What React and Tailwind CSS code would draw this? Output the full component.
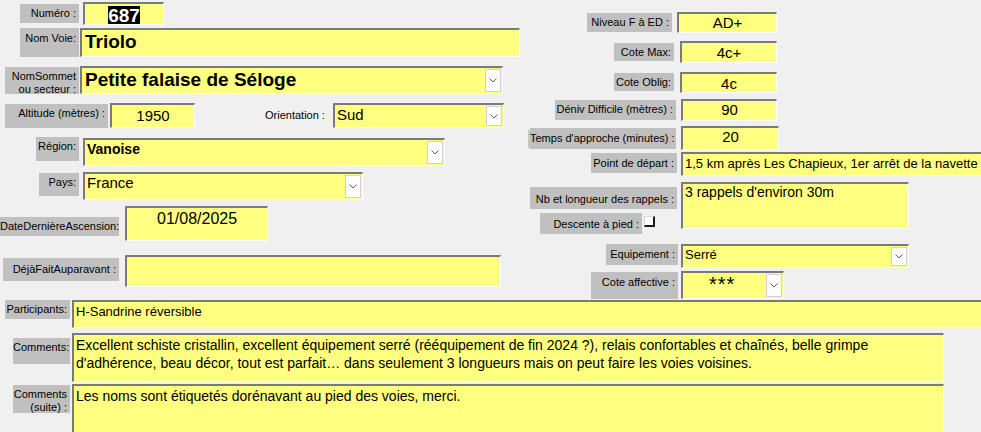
import React from 'react';
import clsx from 'clsx';

// Access-style gray caption
const Label = ({ className, children }) => (
  <div className={clsx('shrink-0 bg-[#c0c0c0] text-[11px] leading-[13px] text-black text-right pr-[3px] pt-[3px] whitespace-nowrap', className)}>
    {children}
  </div>
);

// sunken yellow text box
const Field = ({ className, children }) => (
  <div
    className={clsx(
      'relative shrink-0 bg-[#ffff80] border-t-2 border-l-2 border-r border-b border-t-[#7a7a7a] border-l-[#7a7a7a] border-r-white border-b-white overflow-hidden text-black',
      className
    )}
  >
    {children}
  </div>
);

const DropButton = () => (
  <div className="absolute right-[1px] top-[1px] bottom-[1px] w-[16px] bg-[#fdfdfd] border border-[#d2d2d2] flex items-center justify-center">
    <svg width="8" height="5" viewBox="0 0 8 5">
      <path d="M0.5 0.5 L4 4 L7.5 0.5" stroke="#606060" strokeWidth="1" fill="none" />
    </svg>
  </div>
);

const Combo = ({ className, children }) => (
  <Field className={className}>
    {children}
    <DropButton />
  </Field>
);

export default function App() {
  return (
    <div className="w-[981px] h-[432px] bg-[#f0f0f0] overflow-hidden font-['Liberation_Sans',Arial,sans-serif]">
      <div className="flex h-[300px]">
        {/* Left column */}
        <div className="w-[532px] shrink-0 flex flex-col">
          <div className="flex items-start mt-[2px]">
            <Label className="ml-[20px] mt-[2px] w-[59px] h-[19px]">Numéro :</Label>
            <Field className="ml-[4px] w-[81px] h-[23px] text-center">
              <span className="inline-block bg-black text-white font-bold text-[19px] leading-[19px] mt-[2px]">687</span>
            </Field>
          </div>

          <div className="flex items-start mt-[3px]">
            <Label className="ml-[20px] w-[59px] h-[29px] pt-[4px]">Nom Voie:</Label>
            <Field className="ml-[1px] w-[440px] h-[29px] pl-[3px] font-bold text-[19px] leading-[24px]">Triolo</Field>
          </div>

          <div className="flex items-start mt-[9px]">
            <Label className="ml-[5px] mt-[1px] w-[74px] h-[27px] pt-[1px] leading-[12px]">
              NomSommet<br />ou secteur :
            </Label>
            <Combo className="ml-[1px] w-[423px] h-[28px] pl-[3px] font-bold text-[19px] leading-[24px]">
              Petite falaise de Séloge
            </Combo>
          </div>

          <div className="flex items-start mt-[9px]">
            <Label className="ml-[5px] mt-[1px] w-[103px] h-[24px]">Altitude (mètres) :</Label>
            <Field className="ml-[2px] w-[85px] h-[25px] text-center text-[15px] leading-[22px]">1950</Field>
            <div className="ml-[70px] w-[62px] mt-[6px] text-[11px] leading-[13px] whitespace-nowrap">Orientation :</div>
            <Combo className="ml-[6px] w-[171px] h-[25px] pl-[2px] text-[15px] leading-[19px]">Sud</Combo>
          </div>

          <div className="flex items-start mt-[9px]">
            <Label className="ml-[36px] w-[43px] h-[24px]">Région:</Label>
            <Combo className="ml-[4px] mt-[1px] w-[362px] h-[28px] pl-[2px] font-bold text-[14px] leading-[18px]">Vanoise</Combo>
            <div className="ml-[83px] mt-[-7px] w-[3px] h-[18px] bg-[#c8c8c8]"></div>
          </div>

          <div className="flex items-start mt-[6px]">
            <Label className="ml-[39px] mt-[1px] w-[40px] h-[23px]">Pays:</Label>
            <Combo className="ml-[4px] w-[280px] h-[28px] pl-[2px] text-[15px] leading-[18px]">France</Combo>
          </div>

          <div className="flex items-start mt-[6px]">
            <Label className="mt-[11px] w-[119px] h-[19px] pr-[2px] pt-[3px]">DateDernièreAscension:</Label>
            <Field className="ml-[6px] w-[143px] h-[35px] text-[16px] leading-[20px] pt-[1px]">
              <span className="ml-[30px]">01/08/2025</span>
            </Field>
          </div>

          <div className="flex items-start mt-[14px]">
            <Label className="ml-[3px] mt-[3px] w-[116px] h-[23px] pt-[5px]">DéjàFaitAuparavant :</Label>
            <Field className="ml-[6px] w-[376px] h-[32px]"></Field>
          </div>
        </div>

        {/* Right column */}
        <div className="flex-1 flex flex-col">
          <div className="flex items-start mt-[12px]">
            <Label className="ml-[55px] mt-[1px] w-[85px] h-[19px] pr-[2px]">Niveau F à ED :</Label>
            <Field className="ml-[5px] w-[100px] h-[21px] text-center text-[15px] leading-[18px]">AD+</Field>
          </div>

          <div className="flex items-start mt-[8px]">
            <Label className="ml-[82px] mt-[2px] w-[60px] h-[18px] pt-[2px]">Cote Max:</Label>
            <Field className="ml-[6px] w-[97px] h-[22px] text-center text-[15px] leading-[19px]">4c+</Field>
          </div>

          <div className="flex items-start mt-[9px]">
            <Label className="ml-[82px] mt-[1px] w-[60px] h-[18px] pt-[2px]">Cote Oblig:</Label>
            <Field className="ml-[6px] w-[97px] h-[21px] text-center text-[15px] leading-[19px]">4c</Field>
          </div>

          <div className="flex items-start mt-[6px]">
            <Label className="ml-[23px] mt-[1px] w-[121px] h-[20px]">Déniv Difficile (mètres) :</Label>
            <Field className="ml-[5px] w-[96px] h-[22px] text-center text-[15px] leading-[18px]">90</Field>
          </div>

          <div className="flex items-start mt-[5px]">
            <Label className="ml-[-2px] mt-[2px] w-[146px] h-[21px] pt-[4px]">Temps d'approche (minutes) :</Label>
            <Field className="ml-[5px] w-[98px] h-[24px] text-center text-[15px] leading-[18px]">20</Field>
          </div>

          <div className="flex items-start mt-[2px]">
            <Label className="ml-[59px] mt-[1px] w-[86px] h-[20px] pt-[4px]">Point de départ :</Label>
            <Field className="ml-[4px] w-[320px] h-[24px] pl-[2px] text-[13px] leading-[19px] whitespace-nowrap">
              1,5 km après Les Chapieux, 1er arrêt de la navette
            </Field>
          </div>

          <div className="flex items-start mt-[6px]">
            <div className="ml-[-2px] w-[147px] shrink-0 flex flex-col">
              <Label className="mt-[5px] w-[147px] h-[22px] pt-[6px]">Nb et longueur des rappels :</Label>
              <div className="flex items-start mt-[4px]">
                <Label className="ml-[10px] w-[102px] h-[21px] pt-[5px]">Descente à pied :</Label>
                <div className="ml-[2px] mt-[3px] w-[11px] h-[11px] bg-white border-t border-l border-t-[#d8d8d8] border-l-[#d8d8d8] border-r-2 border-b-2 border-r-[#1a1a1a] border-b-[#1a1a1a]"></div>
              </div>
            </div>
            <Field className="ml-[4px] w-[228px] h-[47px] pl-[2px] text-[14px] leading-[17px]">3 rappels d'environ 30m</Field>
          </div>

          <div className="flex items-start mt-[10px]">
            <Label className="ml-[74px] w-[72px] h-[21px] pt-[4px]">Equipement :</Label>
            <Combo className="ml-[3px] w-[228px] h-[24px] pl-[2px] text-[13px] leading-[18px]">Serré</Combo>
          </div>

          <div className="flex items-start mt-[3px]">
            <Label className="ml-[59px] mt-[1px] w-[87px] h-[27px] pt-[4px]">Cote affective :</Label>
            <Combo className="ml-[3px] w-[103px] h-[28px] text-[20px] leading-[22px]">
              <span className="ml-[26px] tracking-[1px]">***</span>
            </Combo>
          </div>
        </div>
      </div>

      {/* Bottom rows */}
      <div className="flex flex-col">
        <div className="flex items-start">
          <Label className="ml-[5px] w-[65px] h-[19px] pr-[2px] text-[10.5px]">Participants:</Label>
          <Field className="ml-[2px] w-[920px] h-[28px] pl-[2px] text-[13px] leading-[20px] text-[#5a0000]">H-Sandrine réversible</Field>
        </div>

        <div className="flex items-start mt-[5px]">
          <Label className="ml-[13px] mt-[5px] w-[57px] h-[26px] pr-[2px] text-[10.5px]">Comments:</Label>
          <Field className="ml-[2px] w-[872px] h-[49px] pl-[2px] text-[14px] leading-[18px] pt-[1px]">
            Excellent schiste cristallin, excellent équipement serré (rééquipement de fin 2024 ?), relais confortables et chaînés, belle grimpe d'adhérence, beau décor, tout est parfait… dans seulement 3 longueurs mais on peut faire les voies voisines.
          </Field>
        </div>

        <div className="flex items-start mt-[2px]">
          <Label className="ml-[13px] mt-[1px] w-[57px] h-[28px] pr-[2px] pt-[2px] text-[10.5px] leading-[12px]">
            Comments<br />(suite) :
          </Label>
          <Field className="ml-[2px] w-[872px] h-[60px] pl-[2px] text-[14px] leading-[18px] pt-[1px]">
            Les noms sont étiquetés dorénavant au pied des voies, merci.
          </Field>
        </div>
      </div>
    </div>
  );
}
